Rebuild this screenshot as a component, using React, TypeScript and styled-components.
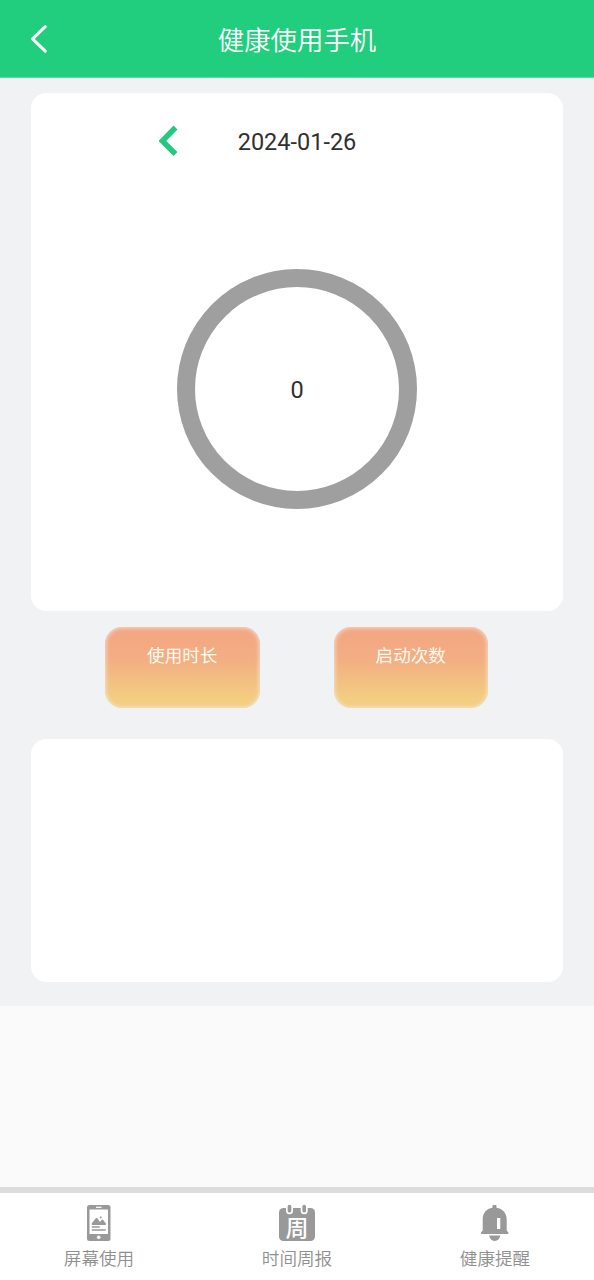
import React from "react";
import styled, { createGlobalStyle } from "styled-components";

const GlobalStyle = createGlobalStyle`
  * { box-sizing: border-box; }
  body {
    margin: 0;
    background: #fafafa;
    font-family: Roboto, "Noto Sans CJK SC", sans-serif;
  }
`;

const Screen = styled.div`
  display: flex;
  flex-direction: column;
  height: 1280px;
  background: #fafafa;
`;

const Header = styled.header`
  display: grid;
  grid-template-columns: 78px 1fr 78px;
  align-items: center;
  flex: none;
  height: 78px;
  border-bottom: 1px solid #62d8a2;
  background: #20ce7d;
`;

const BackButton = styled.button`
  display: flex;
  width: 78px;
  height: 77px;
  padding: 24px 0 0 29px;
  border: 0;
  background: none;
`;

const Title = styled.h1`
  margin: 0;
  padding-top: 4px;
  color: #fff;
  font-size: 26.4px;
  line-height: 38px;
  font-weight: 350;
  text-align: center;
`;

const Content = styled.main`
  flex: none;
  height: 928px;
  padding: 15px 31px 0;
  background: #f0f2f4;
`;

const Card = styled.section<{ $height: number }>`
  height: ${(p) => p.$height}px;
  border-radius: 15.5px;
  background: #fff;
`;

const DateRow = styled.div`
  display: grid;
  grid-template-columns: 1fr 160px 1fr;
  align-items: center;
  height: 95px;
`;

const PrevDay = styled.button`
  display: flex;
  justify-content: flex-end;
  padding: 0 38px 0 0;
  border: 0;
  background: none;
`;

const DateText = styled.span`
  color: #303030;
  font-size: 23.5px;
  line-height: 28px;
  text-align: center;
  padding-top: 2px;
`;

const Ring = styled.div`
  display: flex;
  align-items: center;
  justify-content: center;
  width: 240px;
  height: 240px;
  margin: 80.5px auto 0;
  padding-top: 2px;
  border: 18px solid #9f9f9f;
  border-radius: 50%;
  color: #303030;
  font-size: 23.5px;
`;

const Actions = styled.div`
  display: flex;
  justify-content: space-between;
  padding: 16px 75px 31px 74px;
`;

const ActionButton = styled.button`
  display: flex;
  justify-content: center;
  width: 154.5px;
  height: 81px;
  padding: 16px 0 0;
  border: 0;
  border-radius: 17px;
  background: linear-gradient(#f3a782 8%, #f3ae83 40%, #f3cd80 88%);
  box-shadow: inset 0 0 4px 1px rgba(243, 238, 232, 0.75);
  color: #fffaf0;
  font-family: inherit;
  font-size: 17.6px;
  font-weight: 400;
  line-height: 26px;
`;

const Gap = styled.div`
  flex: 1;
`;

const TabBar = styled.nav`
  display: grid;
  grid-template-columns: repeat(3, 1fr);
  flex: none;
  height: 93px;
  border-top: 6px solid #dcdcdc;
  background: #fff;
`;

const Tab = styled.a`
  display: flex;
  flex-direction: column;
  align-items: center;
  padding-top: 11px;
  color: #8f8f8f;
  font-size: 17.6px;
  font-weight: 350;
  line-height: 26px;
`;

const TabIcon = styled.svg`
  display: block;
  flex: none;
  width: 40px;
  height: 40px;
  margin-bottom: 2px;
`;

const IconGlyph = styled.text`
  fill: #fff;
  font-family: "Noto Sans CJK SC", sans-serif;
  font-size: 23px;
  font-weight: 500;
  text-anchor: middle;
`;

const PhoneIcon = () => (
  <TabIcon viewBox="0 0 40 40">
    <rect x="8" y="1" width="23.5" height="36" rx="2.500" fill="#999" />
    <rect x="10.500" y="5.500" width="18.500" height="24.500" fill="#fff" />
    <path d="M17 3.300h5.500" stroke="#fff" strokeWidth="1.200" />
    <circle cx="19.700" cy="33.300" r="1.800" fill="#fff" />
    <path d="M12.800 21v-1.700l4-5c.6-.6 1.200-.5 1.700.2l2.500 3.500 1.700-2c.5-.6 1.100-.5 1.500.1l2.700 3.500V21z" fill="#999" />
    <circle cx="21.700" cy="13.600" r="1" fill="#999" />
    <path d="M12.800 22.900h8M12.800 25.900h13.900" stroke="#999" strokeWidth="1.500" />
  </TabIcon>
);

const WeekIcon = () => (
  <TabIcon viewBox="0 0 40 40">
    <rect x="2" y="4" width="36" height="33" rx="4.500" fill="#999" />
    <path d="M12.500 3v3.800M27.200 3v3.800" stroke="#fff" strokeWidth="7" strokeLinecap="round" />
    <path d="M12.500 2.700v4M27.200 2.700v4" stroke="#999" strokeWidth="3.700" strokeLinecap="round" />
    <IconGlyph x="20" y="32">周</IconGlyph>
  </TabIcon>
);

const BellIcon = () => (
  <TabIcon viewBox="0 0 40 40">
    <path
      d="M17.500 3.800V2c0-.6.400-1 1-1h2c.6 0 1 .4 1 1v1.800c6.200 1 10.200 5.500 10.200 11.400v11.300l1.700 2v1.500H6v-1.500l1.700-2V15.200C7.700 9.300 11.300 4.800 17.500 3.800z"
      fill="#999"
    />
    <rect x="22" y="14" width="3.300" height="11" fill="#fff" />
    <path d="M14 31.600h11.400c-.8 3.400-2.800 5.400-5.700 5.400s-4.900-2-5.700-5.400z" fill="#999" />
  </TabIcon>
);

export default function App() {
  return (
    <>
      <GlobalStyle />
      <Screen>
        <Header>
          <BackButton aria-label="返回">
            <svg width="20" height="30" viewBox="0 0 20 30">
              <path d="M16.300 2.700 3.500 14.800l12.800 12.400" fill="none" stroke="#fff" strokeWidth="3" strokeLinecap="round" strokeLinejoin="round" />
            </svg>
          </BackButton>
          <Title>健康使用手机</Title>
        </Header>
        <Content>
          <Card $height={518}>
            <DateRow>
              <PrevDay aria-label="前一天">
                <svg width="20" height="32" viewBox="0 0 20 32">
                  <path d="M16.500 2.500 3.300 16l13.200 13" fill="none" stroke="#26c77f" strokeWidth="5.500" />
                </svg>
              </PrevDay>
              <DateText>2024-01-26</DateText>
            </DateRow>
            <Ring>0</Ring>
          </Card>
          <Actions>
            <ActionButton>使用时长</ActionButton>
            <ActionButton>启动次数</ActionButton>
          </Actions>
          <Card $height={243} />
        </Content>
        <Gap />
        <TabBar>
          <Tab><PhoneIcon />屏幕使用</Tab>
          <Tab><WeekIcon />时间周报</Tab>
          <Tab><BellIcon />健康提醒</Tab>
        </TabBar>
      </Screen>
    </>
  );
}
